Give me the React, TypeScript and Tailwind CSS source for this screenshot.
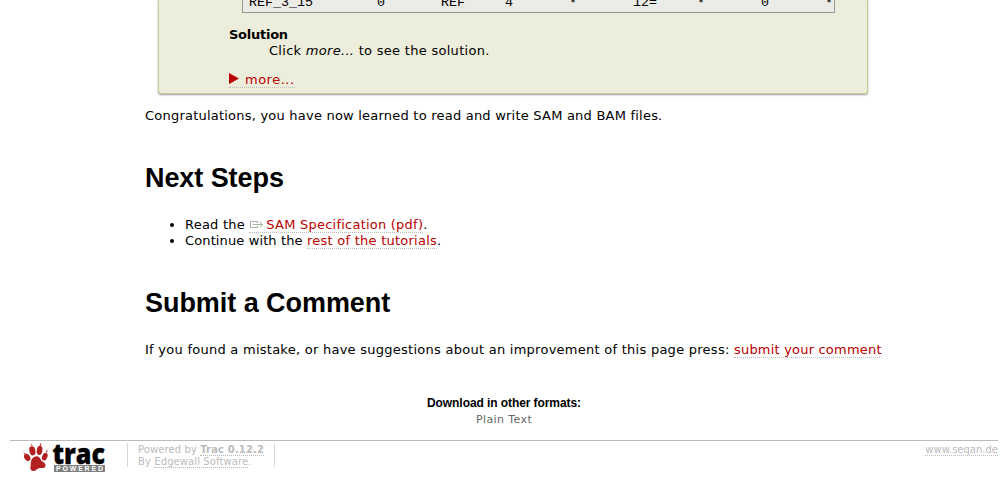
import React from "react";

const ROW = ["REF_3_15", "0", "REF", "4", "*", "12=", "*", "0", "*"];

function Link({ children, className = "" }: { children: React.ReactNode; className?: string }) {
  return (
    <a href="#" className={`inline-block h-[16px] border-b border-dotted border-[#bbb] text-[#b00] ${className}`}>
      {children}
    </a>
  );
}

function ExternalIcon() {
  return (
    <svg width="15" height="10" viewBox="0 0 15 10" className="mr-[2px] inline-block align-[-1px]" fill="none" stroke="#a3b3a0" strokeWidth="1">
      <path d="M8.5 3V1.5H1.5V7.5H8.5V6" />
      <path d="M4 4.5H13.5M10.7 1.7L13.5 4.5L10.7 7.3" />
    </svg>
  );
}

function TracLogo() {
  return (
    <svg width="84" height="32" viewBox="0 0 84 32" role="img">
      <g fill="#b22020">
        <ellipse cx="9.4" cy="8.8" rx="3" ry="4.6" transform="rotate(-12 9.4 8.8)" />
        <ellipse cx="16.6" cy="8.3" rx="2.8" ry="4.6" transform="rotate(8 16.6 8.3)" />
        <ellipse cx="4.2" cy="15.4" rx="2.8" ry="3.9" transform="rotate(-35 4.2 15.4)" />
        <ellipse cx="21.8" cy="14.6" rx="2.6" ry="4" transform="rotate(22 21.8 14.6)" />
        <path d="M8.3 3.5L7.6 1.3L9.8 3.8ZM16.5 3L18.2 .8L18 4ZM1.6 12.3L.2 10L3.2 12ZM22.8 9.5L24.4 7.4L24 10.8Z" />
        <path d="M12.5 14.5C15.5 13.7 17.2 16 18 18.3C19.6 20.1 23.2 21 22.4 24.2C21.4 27 18.4 25.6 15.7 26.2C13.7 26.8 12.3 29.7 9.3 28.8C6.4 27.8 7.8 24.6 7.8 22C7.8 19.2 8.5 15.6 12.5 14.5Z" />
      </g>
      <text x="29.5" y="22" textLength="52.5" lengthAdjust="spacingAndGlyphs" fill="#000" stroke="#000" strokeWidth=".4" className="font-['Open_Sans'] text-[29px] font-extrabold">trac</text>
      <rect x="31" y="23" width="51" height="7" rx=".5" fill="#808080" />
      <text x="33" y="29" textLength="47" fill="#fff" className="font-['Liberation_Sans'] text-[7px] font-bold">POWERED</text>
    </svg>
  );
}

export default function App() {
  return (
    <div className="h-[486px] w-[1008px] overflow-hidden bg-white font-['DejaVu_Sans',sans-serif] text-[13px] leading-[16px] text-black">
      <main className="flex flex-col pl-[145px]">
        <section className="ml-[13px] h-[94px] w-[710px] rounded-b-[3px] border border-t-0 border-[#cc9] bg-[#ecedda] pl-[70px] shadow-[0_1px_2px_#999]">
          <div className="ml-[13px] flex h-[13px] w-[593px] items-end overflow-hidden border border-t-0 border-[#999] bg-[#ebebe8] pl-[6px]">
            {ROW.map((cell, i) => (
              <span key={i} className={`shrink-0 font-['Liberation_Mono',monospace] text-[13.333px] leading-[15px] ${cell === "*" ? "mb-px" : "mb-[2px]"} ${i === 0 ? "w-[128px]" : "w-[64px]"}`}>{cell}</span>
            ))}
          </div>
          <div className="mt-[14px] font-bold tracking-[-0.25px]">Solution</div>
          <div className="ml-[40px] tracking-[0.29px]">Click <em>more...</em> to see the solution.</div>
          <Link className="mt-[13px] tracking-[0.5px]">
            <svg width="10" height="11" viewBox="0 0 10 11" className="mr-[6px] inline-block align-[0px]"><path d="M0 0L10 5.5L0 11Z" fill="#b00" /></svg>
            more...
          </Link>
        </section>
        <p className="mt-[14px] whitespace-nowrap tracking-[0.22px]">Congratulations, you have now learned to read and write SAM and BAM files.</p>
        <h1 className="mt-[38px] h-[32px] whitespace-nowrap font-['Liberation_Sans',sans-serif] text-[27px] font-bold leading-[32px] tracking-[-0.07px]">Next Steps</h1>
        <ul className="ml-[40px] mt-[23px] list-disc whitespace-nowrap">
          <li className="h-[16px] tracking-[0.23px]">Read the <Link><ExternalIcon />SAM Specification (pdf)</Link>.</li>
          <li className="h-[16px] tracking-[0.12px]">Continue with the <Link className="tracking-[0.25px]">rest of the tutorials</Link>.</li>
        </ul>
        <h1 className="mt-[38px] h-[32px] whitespace-nowrap font-['Liberation_Sans',sans-serif] text-[27px] font-bold leading-[32px] tracking-[-0.05px]">Submit a Comment</h1>
        <p className="mt-[23px] whitespace-nowrap tracking-[0.26px]">If you found a mistake, or have suggestions about an improvement of this page press: <Link className="tracking-[0.2px]">submit your comment</Link></p>
      </main>
      <div className="mt-[37px] flex h-[45px] flex-col items-center text-[11px]">
        <h3 className="font-['Liberation_Sans',sans-serif] text-[12px] font-bold leading-[16px] tracking-[-0.08px]">Download in other formats:</h3>
        <a href="#" className="leading-[17px] tracking-[0.4px] text-[#666]">Plain Text</a>
      </div>
      <footer className="mx-[10px] flex h-[46px] border-t border-[#bbb] text-[10px] leading-[12px] text-[#bbb]">
        <a href="#" className="ml-[13px] mt-px h-[32px] w-[84px]"><TracLogo /></a>
        <p className="ml-[20px] mt-[2px] h-[24px] w-[148px] whitespace-nowrap border-x border-[#d7d7d7] pl-[10px] pt-px">
          <span className="tracking-[0.1px]">Powered by </span><a href="#" className="inline-block h-[12px] border-b border-dotted font-bold tracking-[0.15px]">Trac 0.12.2</a><br />
          <span className="tracking-[0.1px]">By <a href="#" className="inline-block h-[12px] border-b border-dotted">Edgewall Software</a>.</span>
        </p>
        <p className="ml-auto mt-[3px]"><a href="#" className="inline-block h-[12px] border-b border-dotted">www.seqan.de</a></p>
      </footer>
    </div>
  );
}
